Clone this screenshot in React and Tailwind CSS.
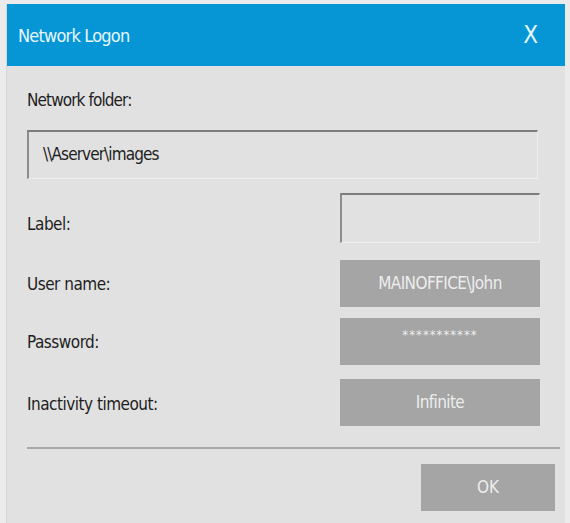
import React from 'react'

const font = { fontFamily: '"DejaVu Sans Condensed", "Liberation Sans", sans-serif' }

function GreyBox({ children }) {
  return (
    <div className="w-[200px] h-[47px] bg-[#a5a5a5] flex items-center justify-center text-[17px] tracking-[-0.6px] text-[#ededed]">
      {children}
    </div>
  )
}

function Row({ label, children, className = '', labelClass = '' }) {
  return (
    <div className={`flex items-center justify-between pr-[25px] ${className}`}>
      <span className={`text-[17px] tracking-[-0.5px] text-[#1e1e1e] ${labelClass}`}>{label}</span>
      {children}
    </div>
  )
}

export default function App() {
  return (
    <div className="w-[570px] h-[523px] bg-[#ebebeb] pt-[4px] pl-[6px] pr-[5px] overflow-hidden" style={font}>
      <div className="h-[519px] bg-[#e1e1e1] border-l border-[#d6d6d6]">
        {/* Title bar */}
        <div className="h-[62px] bg-[#0696d5] flex items-center justify-between pl-[11px] pr-[27px]">
          <span className="text-[18px] tracking-[-0.8px] text-[#e6f6ff]">Network Logon</span>
          <span className="text-[24px] text-[#e6f6ff] leading-none">X</span>
        </div>

        <div className="pl-[20px]">
          <div className="mt-[24px] text-[17px] leading-[20px] tracking-[-0.9px] text-[#1e1e1e]">Network folder:</div>
          <div className="mt-[20px] mr-[27px] h-[49px] border-t-2 border-l-2 border-t-[#7c7c7c] border-l-[#8c8c8c] border-r border-b border-r-[#eeeeee] border-b-[#eeeeee] flex items-center pl-[14px] text-[17px] tracking-[-0.9px] text-[#1e1e1e]">
            \\Aserver\images
          </div>

          <Row label="Label:" className="mt-[14px]" labelClass="pt-[14px]">
            <div className="w-[200px] h-[50px] border-t-2 border-l-2 border-t-[#7c7c7c] border-l-[#8c8c8c] border-r border-b border-r-[#eeeeee] border-b-[#eeeeee]" />
          </Row>
          <Row label="User name:" className="mt-[17px]" labelClass="pt-[2px]">
            <GreyBox>MAINOFFICE\John</GreyBox>
          </Row>
          <Row label="Password:" className="mt-[11px]" labelClass="pt-[2px]">
            <GreyBox>
              <span className="-mt-[14px] text-[13px] tracking-[1px]">***********</span>
            </GreyBox>
          </Row>
          <Row label="Inactivity timeout:" className="mt-[14px]" labelClass="pt-[4px]">
            <GreyBox>Infinite</GreyBox>
          </Row>

          <div className="mt-[21px] mr-[5px] h-[2px] bg-[#a9a9a9]" />

          <div className="mt-[15px] flex justify-end pr-[10px]">
            <div className="w-[134px] h-[47px] bg-[#a5a5a5] flex items-center justify-center text-[17px] text-[#ededed]">
              OK
            </div>
          </div>
        </div>
      </div>
    </div>
  )
}
